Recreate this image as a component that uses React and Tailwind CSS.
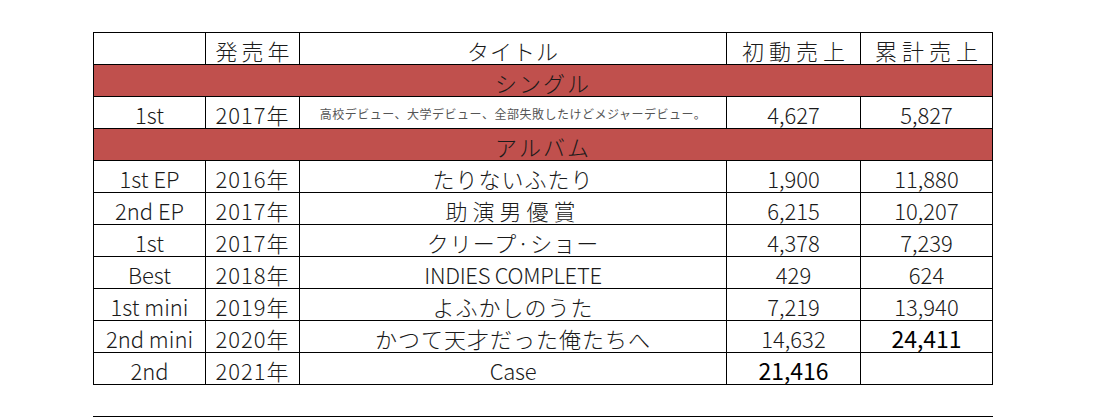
import React from "react";

const rows = [
  { a: "1st EP", y: "2016年", t: "たりないふたり", s: "1,900", c: "11,880" },
  { a: "2nd EP", y: "2017年", t: "助演男優賞", s: "6,215", c: "10,207", tw: true },
  { a: "1st", y: "2017年", t: "クリープ·ショー", s: "4,378", c: "7,239" },
  { a: "Best", y: "2018年", t: "INDIES COMPLETE", s: "429", c: "624", latin: true },
  { a: "1st mini", y: "2019年", t: "よふかしのうた", s: "7,219", c: "13,940" },
  { a: "2nd mini", y: "2020年", t: "かつて天才だった俺たちへ", s: "14,632", c: "24,411", cb: true },
  { a: "2nd", y: "2021年", t: "Case", s: "21,416", c: "", sb: true, latin: true },
];

const cell = "bg-white flex items-center justify-center leading-none text-[22px] font-light text-[#1a1a1a] pt-[3px]";
const boldCell = "bg-white flex items-center justify-center leading-none text-[23px] font-normal text-black pt-[3px]";

function Header() {
  return (
    <>
      <div className={cell}></div>
      <div className={cell + " tracking-[4px] pl-[4px]"}>発売年</div>
      <div className={cell + " tracking-[1px]"}>タイトル</div>
      <div className={cell + " tracking-[5px] pl-[5px]"}>初動売上</div>
      <div className={cell + " tracking-[5px] pl-[5px]"}>累計売上</div>
    </>
  );
}

function Band({ label }) {
  return (
    <div className="col-span-5 bg-[#c0504d] flex items-center justify-center leading-none text-[22px] font-light text-[#1a1a1a] tracking-[2px] pt-[3px]">
      {label}
    </div>
  );
}

export default function App() {
  return (
    <div
      className="w-[1106px] h-[417px] bg-white overflow-hidden pt-[32px] pl-[93px]"
      style={{ fontFamily: '"Noto Sans CJK JP", "Noto Sans", sans-serif' }}
    >
      <div className="w-[900px] grid grid-cols-[111px_93px_426px_133px_131px] auto-rows-[31px] gap-px bg-black p-px">
        <Header />
        <Band label="シングル" />
        <div className={cell}>1st</div>
        <div className={cell + " tracking-[1px]"}>2017年</div>
        <div className="bg-white flex items-center justify-center leading-none text-[12px] text-[#555] tracking-[0.5px] pt-[2px]">
          高校デビュー、大学デビュー、全部失敗したけどメジャーデビュー。
        </div>
        <div className={cell}>4,627</div>
        <div className={cell}>5,827</div>
        <Band label="アルバム" />
        {rows.map((r, i) => (
          <React.Fragment key={i}>
            <div className={cell}>{r.a}</div>
            <div className={cell + " tracking-[1px]"}>{r.y}</div>
            <div
              className={
                cell +
                (r.tw ? " tracking-[5px]" : r.latin ? " tracking-[-0.3px]" : " tracking-[1px]")
              }
            >
              {r.t}
            </div>
            <div className={r.sb ? boldCell : cell}>{r.s}</div>
            <div className={r.cb ? boldCell : cell}>{r.c}</div>
          </React.Fragment>
        ))}
      </div>
      <div className="w-[900px] h-px bg-black mt-[31px]"></div>
    </div>
  );
}
